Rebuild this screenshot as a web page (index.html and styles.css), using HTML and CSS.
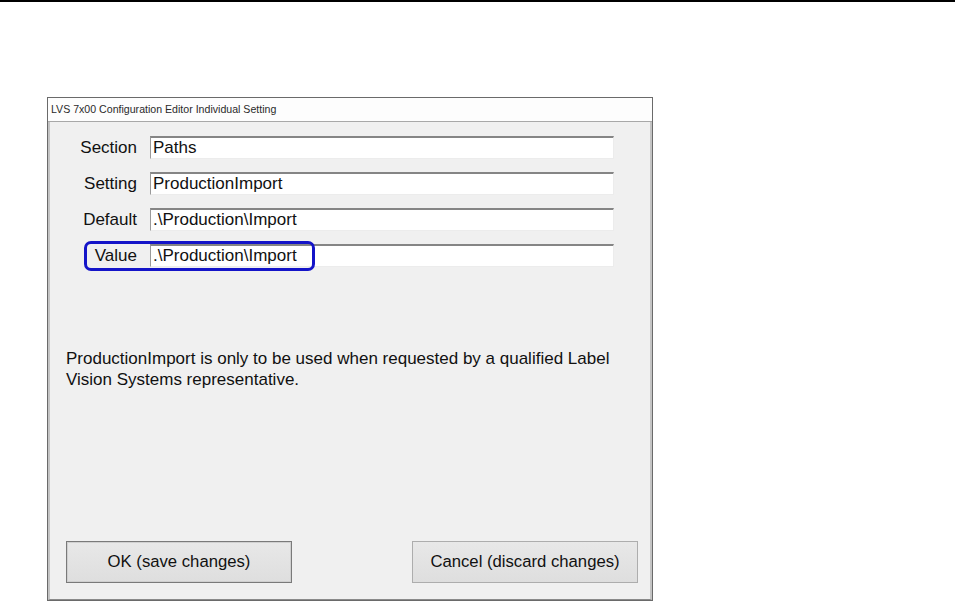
FILE: index.html
```html
<!DOCTYPE html>
<html>
<head>
<meta charset="utf-8">
<link rel="stylesheet" href="styles.css">
</head>
<body>
<div class="top-rule"></div>
<div class="dialog">
  <div class="titlebar">LVS 7x00 Configuration Editor Individual Setting</div>
  <div class="content">
    <div class="form">
      <label class="lbl">Section</label><div class="field">Paths</div>
      <label class="lbl">Setting</label><div class="field">ProductionImport</div>
      <label class="lbl">Default</label><div class="field">.\Production\Import</div>
      <label class="lbl">Value</label><div class="field">.\Production\Import</div>
    </div>
    <p class="desc">ProductionImport is only to be used when requested by a qualified Label Vision Systems representative.</p>
    <div class="buttons">
      <button class="btn btn-default">OK (save changes)</button>
      <button class="btn">Cancel (discard changes)</button>
    </div>
  </div>
  <div class="highlight"></div>
</div>
</body>
</html>
```

FILE: styles.css
```css
html, body {
  margin: 0;
  padding: 0;
  background: #ffffff;
  overflow: hidden;
}
body {
  width: 955px;
  height: 601px;
  font-family: "Liberation Sans", Arial, sans-serif;
  color: #111;
}
.top-rule {
  height: 2px;
  background: #000;
}
.dialog {
  position: relative;
  box-sizing: border-box;
  margin: 95px 0 0 47px;
  width: 606px;
  height: 504px;
  border: 1px solid #6a6a6a;
  background: #f0f0f0;
  display: flex;
  flex-direction: column;
}
.titlebar {
  height: 23px;
  background: #fdfdfd;
  border-bottom: 1px solid #a8a8a8;
  font-size: 10.6px;
  line-height: 23px;
  padding-left: 3px;
  color: #2a2a2a;
  white-space: nowrap;
}
.content {
  flex: 1;
  box-sizing: border-box;
  border-left: 2px solid #c4c4c4;
  border-right: 2px solid #c4c4c4;
  border-bottom: 1px solid #8a8a8a;
  background: #f0f0f0;
  padding-top: 14px;
}
.form {
  display: grid;
  grid-template-columns: 87px 464px;
  column-gap: 13px;
  row-gap: 13px;
}
.lbl {
  font-size: 17px;
  line-height: 23px;
  text-align: right;
  color: #111;
}
.field {
  box-sizing: border-box;
  height: 23px;
  background: #fff;
  border-top: 2px solid #858585;
  border-left: 1px solid #9a9a9a;
  border-right: 1px solid #ececec;
  border-bottom: 1px solid #ececec;
  font-size: 17px;
  line-height: 19px;
  padding-left: 2px;
  color: #111;
  white-space: nowrap;
}
.desc {
  margin: 81px 20px 0 16px;
  font-size: 17px;
  line-height: 21px;
  color: #111;
}
.buttons {
  display: flex;
  justify-content: space-between;
  padding: 0 12px 0 16px;
  margin-top: 151px;
}
.btn {
  box-sizing: border-box;
  width: 226px;
  height: 42px;
  border: 1px solid #adadad;
  background: linear-gradient(#e8e8e8, #dedede);
  font-family: "Liberation Sans", Arial, sans-serif;
  font-size: 16.7px;
  color: #111;
  padding: 0;
}
.btn-default {
  border: 1px solid #7a7a7a;
  box-shadow: inset 0 0 0 1px #d0d0d0;
}
.highlight {
  position: absolute;
  left: 36px;
  top: 143px;
  width: 231px;
  height: 30px;
  box-sizing: border-box;
  border: 3px solid #1414c8;
  border-radius: 7px;
}
```
